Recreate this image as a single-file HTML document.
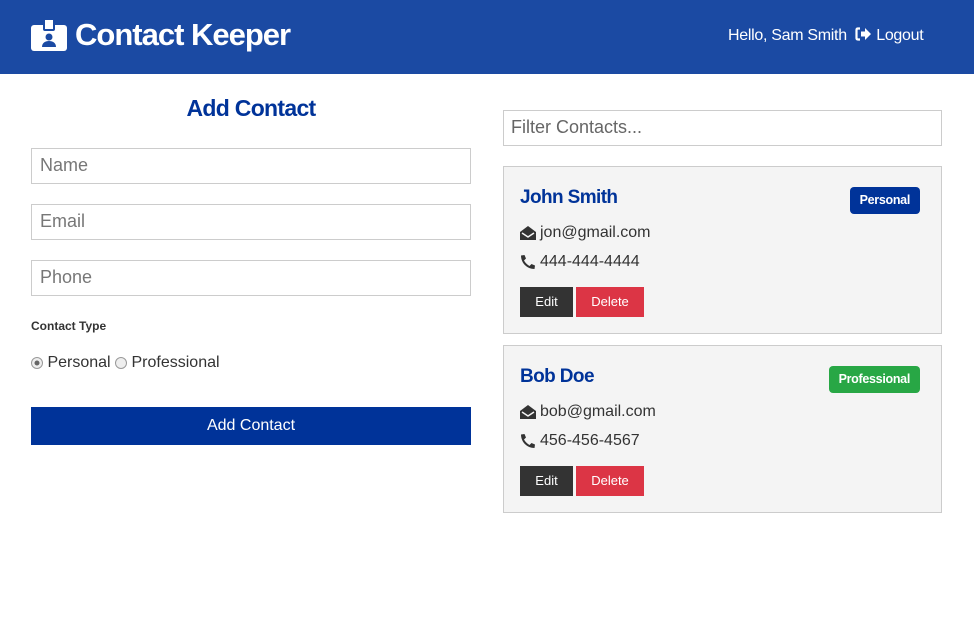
<!DOCTYPE html>
<html><head><style>
*{box-sizing:border-box;margin:0;padding:0}
body{width:974px;height:631px;background:#fff;font-family:"Liberation Sans",sans-serif;color:#333;position:relative;overflow:hidden}
.nav{position:absolute;left:0;top:0;width:974px;height:74px;background:#1b4aa3;color:#fff}
.logo{position:absolute;left:31px;top:17px;font-size:31px;font-weight:bold;letter-spacing:-1px;display:flex;align-items:center}
.logo svg{margin-right:8px}
.right{position:absolute;left:728px;top:27px;font-size:16px;letter-spacing:-0.3px}
.ab{position:absolute}
h1{position:absolute;left:31px;width:440px;top:95px;text-align:center;color:#003399;font-size:23px;font-weight:bold;letter-spacing:-0.7px}
.in{position:absolute;left:31px;width:440px;height:36px;border:1px solid #ccc;font-size:18px;color:#777;padding:6px 8px}
.card{position:absolute;left:503px;width:439px;height:168px;background:#f4f4f4;border:1px solid #ccc}
.name{position:absolute;left:16px;top:20px;font-size:19px;color:#003399;font-weight:bold;letter-spacing:-0.6px}
.badge{position:absolute;right:21px;top:20px;height:27px;padding:0 10px;border-radius:4px;color:#fff;font-size:12.5px;font-weight:bold;line-height:27px;letter-spacing:-0.3px}
.ln{position:absolute;left:16px;font-size:16px;display:flex;align-items:center;gap:4px}
.btn{position:absolute;top:120px;height:30px;color:#fff;font-size:13px;text-align:center;line-height:30px}
</style></head><body>
<div class="nav">
<div class="logo"><svg width="36" height="32" viewBox="0 0 36 32"><rect x="0" y="6" width="36" height="26" rx="3" fill="#fff"/><rect x="13" y="0" width="10" height="11" rx="1" fill="#fff" stroke="#1b4aa3" stroke-width="2"/><circle cx="18" cy="18" r="3.5" fill="#1b4aa3"/><path d="M11 28c0-4 3-6 7-6s7 2 7 6z" fill="#1b4aa3"/></svg>Contact Keeper</div>
<div class="right">Hello, Sam Smith &nbsp;<svg width="17" height="14" viewBox="0 0 17 14" style="vertical-align:-1px"><path d="M5 1.5H3C2 1.5 1.5 2 1.5 3v8c0 1 .5 1.5 1.5 1.5h2" stroke="#fff" stroke-width="2.2" fill="none"/><path d="M6 4.5h4V1l6 6-6 6V9.5H6z" fill="#fff"/></svg> Logout</div>
</div>
<h1>Add Contact</h1>
<div class="in" style="top:148px">Name</div>
<div class="in" style="top:204px">Email</div>
<div class="in" style="top:260px">Phone</div>
<div class="ab" style="left:31px;top:319px;font-size:12px;font-weight:bold">Contact Type</div>
<div class="ab" style="left:31px;top:354px;font-size:16px;display:flex;align-items:center"><svg width="12" height="12"><circle cx="6" cy="6" r="5.5" fill="#eee" stroke="#999"/><circle cx="6" cy="6" r="2.5" fill="#666"/></svg>&nbsp;Personal&nbsp;<svg width="12" height="12"><circle cx="6" cy="6" r="5.5" fill="#eee" stroke="#999"/></svg>&nbsp;Professional</div>
<div class="ab" style="left:31px;top:407px;width:440px;height:38px;background:#003399;color:#fff;font-size:16px;text-align:center;line-height:38px">Add Contact</div>
<div class="ab" style="left:503px;top:110px;width:439px;height:36px;border:1px solid #ccc;font-size:18px;color:#666;padding:6px 7px">Filter Contacts...</div>

<div class="card" style="top:166px">
<div class="name">John Smith</div>
<div class="badge" style="background:#003399">Personal</div>
<div class="ln" style="top:57px"><svg width="16" height="15" viewBox="0 0 16 15"><path d="M0 6L8 0l8 6v8H0z" fill="#333"/><path d="M2 7l6 4 6-4" stroke="#f4f4f4" stroke-width="1.5" fill="none"/></svg>jon@gmail.com</div>
<div class="ln" style="top:86px"><svg width="16" height="16" viewBox="0 0 16 16"><path d="M15 11.5l-3.5-1.5-2 2C7 10.5 5.5 9 4 6.5l2-2L4.5 1 1 1.5C1 9 7 15 14.5 15z" fill="#333"/></svg>444-444-4444</div>
<div class="btn" style="left:16px;width:53px;background:#333">Edit</div>
<div class="btn" style="left:72px;width:68px;background:#dc3545">Delete</div>
</div>
<div class="card" style="top:345px">
<div class="name">Bob Doe</div>
<div class="badge" style="background:#28a745">Professional</div>
<div class="ln" style="top:57px"><svg width="16" height="15" viewBox="0 0 16 15"><path d="M0 6L8 0l8 6v8H0z" fill="#333"/><path d="M2 7l6 4 6-4" stroke="#f4f4f4" stroke-width="1.5" fill="none"/></svg>bob@gmail.com</div>
<div class="ln" style="top:86px"><svg width="16" height="16" viewBox="0 0 16 16"><path d="M15 11.5l-3.5-1.5-2 2C7 10.5 5.5 9 4 6.5l2-2L4.5 1 1 1.5C1 9 7 15 14.5 15z" fill="#333"/></svg>456-456-4567</div>
<div class="btn" style="left:16px;width:53px;background:#333">Edit</div>
<div class="btn" style="left:72px;width:68px;background:#dc3545">Delete</div>
</div>
</body></html>
